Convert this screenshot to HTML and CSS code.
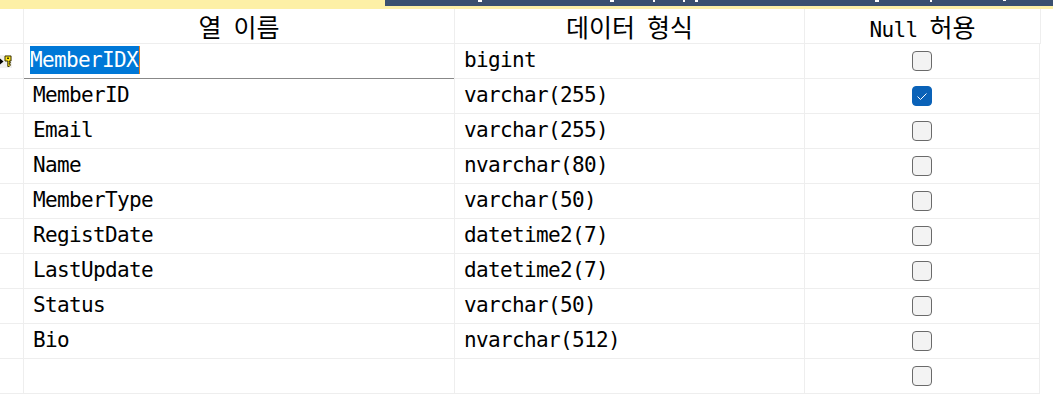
FILE: index.html
```html
<!DOCTYPE html>
<html lang="ko">
<head>
<meta charset="utf-8">
<title>테이블 디자이너</title>
<link rel="stylesheet" href="styles.css">
</head>
<body>
<div class="topbar"><div class="tab-blue"></div></div>
<div class="grid">
  <div class="row head">
    <div class="c sel"></div><div class="c name"><span><span class="ko">열</span> <span class="ko">이름</span></span></div><div class="c type"><span><span class="ko">데이터</span> <span class="ko">형식</span></span></div><div class="c null"><span>Null <span class="ko">허용</span></span></div>
  </div>
  <div class="row">
    <div class="c sel"><span class="marker"><svg width="12" height="13" viewBox="0 0 12 13"><path d="M0 3.500l3.500 3-3.500 3z" fill="#000"/><path d="M5 1h6v5h-1.800v1h1v1.200h-1v1h1v1.200l-1 1.100h-1.400V6H5z" fill="#ffe81a" stroke="#3a3000" stroke-width="1"/><rect x="7" y="2.500" width="2" height="1.500" fill="#3a3000"/></svg></span></div>
    <div class="c name active"><span class="picked">MemberIDX</span></div><div class="c type">bigint</div><div class="c null"><span class="box"></span></div>
  </div>
  <div class="row"><div class="c sel"></div><div class="c name">MemberID</div><div class="c type">varchar(255)</div><div class="c null"><span class="box on"><svg width="12" height="9" viewBox="0 0 12 9"><path d="M1.500 4.500l3 3L10.500 1.500" fill="none" stroke="#fff" stroke-width="1"/></svg></span></div></div>
  <div class="row"><div class="c sel"></div><div class="c name">Email</div><div class="c type">varchar(255)</div><div class="c null"><span class="box"></span></div></div>
  <div class="row"><div class="c sel"></div><div class="c name">Name</div><div class="c type">nvarchar(80)</div><div class="c null"><span class="box"></span></div></div>
  <div class="row"><div class="c sel"></div><div class="c name">MemberType</div><div class="c type">varchar(50)</div><div class="c null"><span class="box"></span></div></div>
  <div class="row"><div class="c sel"></div><div class="c name">RegistDate</div><div class="c type">datetime2(7)</div><div class="c null"><span class="box"></span></div></div>
  <div class="row"><div class="c sel"></div><div class="c name">LastUpdate</div><div class="c type">datetime2(7)</div><div class="c null"><span class="box"></span></div></div>
  <div class="row"><div class="c sel"></div><div class="c name">Status</div><div class="c type">varchar(50)</div><div class="c null"><span class="box"></span></div></div>
  <div class="row"><div class="c sel"></div><div class="c name">Bio</div><div class="c type">nvarchar(512)</div><div class="c null"><span class="box"></span></div></div>
  <div class="row"><div class="c sel"></div><div class="c name"></div><div class="c type"></div><div class="c null"><span class="box"></span></div></div>
</div>
</body>
</html>
```
FILE: styles.css
```css
html, body { margin: 0; padding: 0; background: #fff; }
body { width: 1053px; height: 410px; overflow: hidden; font-family: "DejaVu Sans Mono", "Noto Sans CJK KR", monospace; font-size: 21px; letter-spacing: -0.64px; color: #000; }
.topbar { display: flex; justify-content: flex-end; height: 9px; background: #fdf0a6; }
.tab-blue {
  width: 668px; height: 6px;
  background-color: #3a5070;
  background-image:
    linear-gradient(#fff, #fff), linear-gradient(#fff, #fff), linear-gradient(#fff, #fff), linear-gradient(#fff, #fff),
    linear-gradient(#fff, #fff), linear-gradient(#fff, #fff), linear-gradient(#fff, #fff), linear-gradient(#fff, #fff);
  background-repeat: no-repeat;
  background-size: 4px 2px, 4px 2px, 2px 2px, 2px 2px, 3px 2px, 4px 2px, 2px 2px, 3px 1px;
  background-position: 93px 0, 225px 0, 268px 0, 298px 0, 310px 0, 490px 0, 545px 0, 618px 0;
}
.grid { display: flex; flex-direction: column; }
.row { display: grid; grid-template-columns: 24px 431px 350px 235px; width: 1040px; height: 35px; box-sizing: border-box; border-bottom: 1px solid #eeeeee; }
.row.head { grid-template-columns: 24px 431px 350px 236px; width: 1041px; }
.c { box-sizing: border-box; border-right: 1px solid #eeeeee; display: flex; align-items: center; height: 34px; padding-bottom: 2px; white-space: pre; }
.c.sel { justify-content: flex-start; padding-bottom: 0; }
.c.name { padding-left: 9px; }
.c.type { padding-left: 9px; }
.c.null { justify-content: center; padding-bottom: 0; }
.head .c { justify-content: center; padding-left: 0; padding-bottom: 1px; }
.ko { font-size: 25px; letter-spacing: 0; }
.marker { display: flex; width: 12px; height: 13px; background: #f0f0f0; margin-top: 1px; }
.picked { background: #0078d7; color: #fff; margin-left: -3px; padding: 2px 1px 2px 0; box-shadow: 1px 0 0 #e8801e; }
.active { position: relative; }
.active::after { content: ""; position: absolute; left: 0; right: 0; bottom: -1px; height: 1px; background: #888; }
.box { display: flex; align-items: center; justify-content: center; box-sizing: border-box; width: 20px; height: 20px; border: 1px solid #6a6a6a; border-radius: 4px; background: #f3f3f3; }
.box.on { background: #0a62b8; border-color: #0a62b8; }
```
